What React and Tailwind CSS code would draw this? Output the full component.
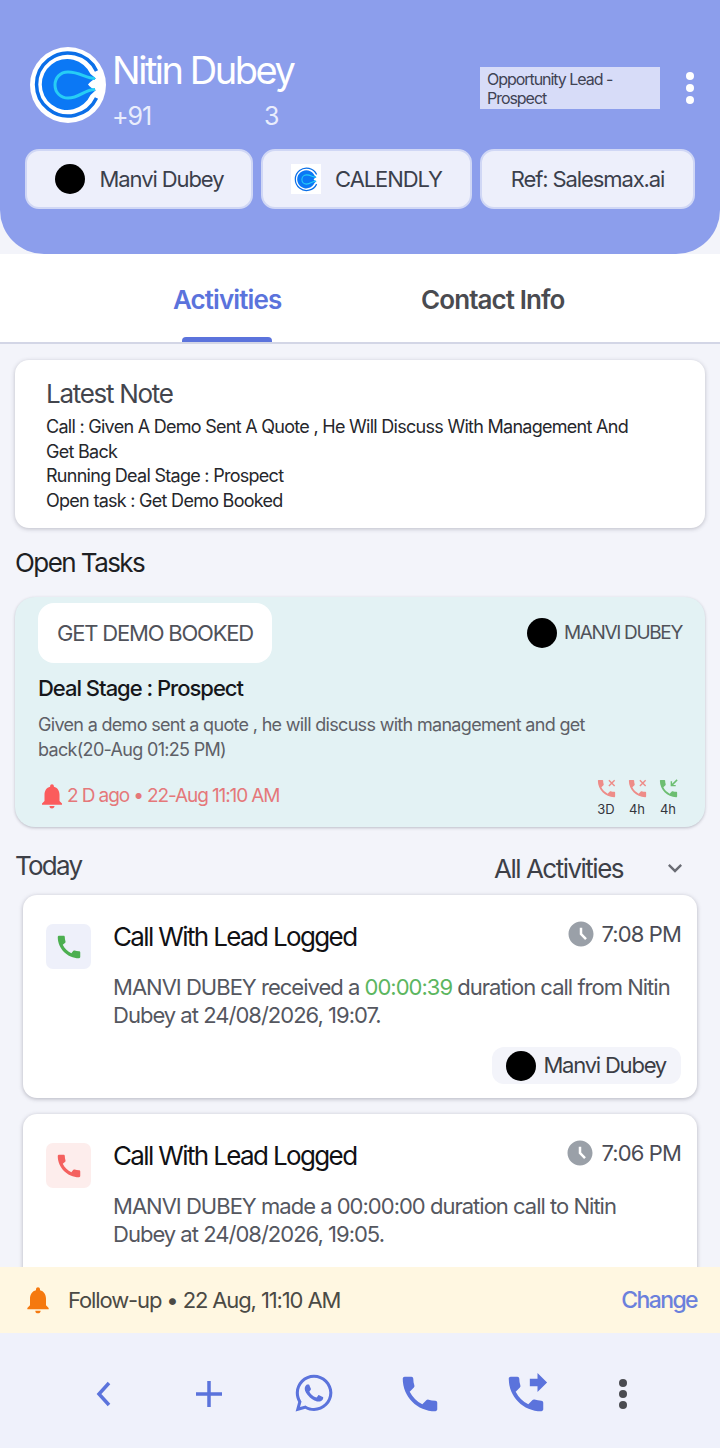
import React from 'react';
import { MdNotifications, MdAccessTimeFilled, MdPhoneForwarded, MdCall, MdKeyboardArrowDown } from 'react-icons/md';
import { FaWhatsapp } from 'react-icons/fa';

const PHONE = 'M6.62 10.79c1.44 2.83 3.76 5.14 6.59 6.59l2.2-2.2c.27-.27.67-.36 1.02-.24 1.12.37 2.33.57 3.57.57.55 0 1 .45 1 1V20c0 .55-.45 1-1 1-9.39 0-17-7.61-17-17 0-.55.45-1 1-1h3.5c.55 0 1 .45 1 1 0 1.25.2 2.45.57 3.57.11.35.03.74-.25 1.02l-2.2 2.2z';

// Calendly style mark: open ring, notched disc, cyan C
function CalendlyLogo({ className }) {
  return (
    <svg className={className} viewBox="0 0 76 76">
      <circle cx="38" cy="38" r="38" fill="#ffffff" />
      <path d="M66.5 24A31.5 31.5 0 1 0 66.5 51" fill="none" stroke="#0B6FE8" strokeWidth="3.5" />
      <path d="M60.5 27A25.5 25.5 0 1 0 60.5 48L66 43C62 42 60 40 58 37.5C60 35 62 33 66 31.5Z" fill="#0B78F5" />
      <path d="M65 31.5C56 31.5 50 25 38 25C30 25 25 31 25 38C25 46 31 51 38 51C50 51 54 42.5 65 42.5" fill="none" stroke="#27CDF5" strokeWidth="3" />
    </svg>
  );
}

function MissedCall({ color = '#EE8C88' }) {
  return (
    <svg className="w-[23px] h-[23px] shrink-0" viewBox="0 0 24 24">
      <path d={PHONE} fill={color} />
      <path d="M14.5 3.5l6 6M20.5 3.5l-6 6" stroke={color} strokeWidth="1.5" fill="none" />
    </svg>
  );
}

function IncomingCall() {
  return (
    <svg className="w-[23px] h-[23px] shrink-0" viewBox="0 0 24 24">
      <path d={PHONE} fill="#6DBE71" />
      <path d="M21 3l-6 6M15 4.5V9h4.5" stroke="#6DBE71" strokeWidth="1.5" fill="none" />
    </svg>
  );
}

function Chip({ children, className }) {
  return (
    <div className={`h-[60px] flex items-center justify-center bg-[#EDEFFB] rounded-[14px] border-2 border-[#D0D7F5] text-[#3B3F4C] text-[22px] tracking-[-0.05em] ${className}`}>
      {children}
    </div>
  );
}

function CallCard({ iconBg, iconColor, time, children, footer, className }) {
  return (
    <div className={`mx-[23px] bg-white rounded-[14px] shadow-[0_1px_4px_rgba(60,60,80,0.35)] pl-[23px] pr-[16px] flex ${className}`}>
      <div className={`w-[45px] h-[45px] mt-[29px] rounded-[7px] flex items-center justify-center shrink-0 ${iconBg}`}>
        <MdCall className={`w-[30px] h-[30px] ${iconColor}`} />
      </div>
      <div className="ml-[22px] flex-1 pt-[23px]">
        <div className="flex items-start justify-between">
          <div className="text-[26px] leading-[38px] text-[#111114] tracking-[-0.063em]">Call With Lead Logged</div>
          <div className="flex items-center mt-[1px] text-[22px] leading-[30px] text-[#4A4C55] tracking-[-0.04em]">
            <MdAccessTimeFilled className="w-[30px] h-[30px] text-[#9AA0A8] mr-[6px]" />
            {time}
          </div>
        </div>
        <div className="mt-[18px] text-[22px] leading-[27.5px] text-[#55575F] tracking-[-0.045em]">{children}</div>
        {footer}
      </div>
    </div>
  );
}

export default function App() {
  return (
    <div className="w-[720px] h-[1448px] flex flex-col overflow-hidden bg-[#F3F4FA] font-['Inter',sans-serif]">
      {/* header */}
      <div className="h-[254px] shrink-0 bg-[#8C9EEC] rounded-b-[44px] px-[24px] pt-[46px]">
        <div className="flex h-[103px]">
          <CalendlyLogo className="w-[76px] h-[76px] ml-[6px] mt-[1px] shrink-0" />
          <div className="ml-[6px] w-[368px] text-white">
            <div className="text-[38px] leading-[48px] tracking-[-0.065em]">Nitin Dubey</div>
            <div className="flex text-[25px] leading-[30px] mt-[7px] text-[#E9EDFC] tracking-[-0.04em]">
              <span className="w-[152px]">+91</span>
              <span>3</span>
            </div>
          </div>
          <div className="w-[180px] h-[42px] mt-[21px] bg-[#D7DCF8] pl-[7px] pt-[3px] text-[16px] leading-[19px] text-[#3F4354] tracking-[-0.065em]">
            Opportunity Lead -<br />Prospect
          </div>
          <div className="flex flex-col gap-[4px] ml-[26px] mt-[26px]">
            <span className="w-[8px] h-[8px] rounded-full bg-white" />
            <span className="w-[8px] h-[8px] rounded-full bg-white" />
            <span className="w-[8px] h-[8px] rounded-full bg-white" />
          </div>
        </div>
        <div className="flex gap-[8px] ml-[1px]">
          <Chip className="w-[228px]">
            <span className="w-[30px] h-[30px] rounded-full bg-black mr-[15px]" />
            Manvi Dubey
          </Chip>
          <Chip className="w-[211px]">
            <span className="w-[30px] h-[30px] bg-white mr-[14px] flex items-center justify-center">
              <CalendlyLogo className="w-[27px] h-[27px]" />
            </span>
            CALENDLY
          </Chip>
          <Chip className="w-[215px]">Ref: Salesmax.ai</Chip>
        </div>
      </div>

      {/* tabs */}
      <div className="h-[90px] shrink-0 bg-white border-b-2 border-[#D3D6E6] flex relative">
        <div className="absolute left-[173px] top-[30px] text-[26px] leading-[32px] font-semibold text-[#5B73DC] tracking-[-0.035em]">Activities</div>
        <div className="absolute left-[421px] top-[30px] text-[26px] leading-[32px] font-semibold text-[#4A4B50] tracking-[-0.035em]">Contact Info</div>
        <div className="absolute left-[182px] bottom-0 w-[90px] h-[5px] rounded-t-[4px] bg-[#5B73DC]" />
      </div>

      {/* scroll area */}
      <div className="flex-1 overflow-hidden pt-[16px]">
        <div className="mx-[15px] h-[168px] bg-white rounded-[14px] shadow-[0_1px_4px_rgba(60,60,80,0.3)] pl-[31px] pr-[60px] pt-[18px]">
          <div className="text-[26px] leading-[32px] text-[#43454D] tracking-[-0.05em]">Latest Note</div>
          <div className="mt-[5px] text-[18px] leading-[24.7px] text-[#26272C] tracking-[-0.04em]">
            Call : Given A Demo Sent A Quote , He Will Discuss With Management And Get Back<br />
            Running Deal Stage : Prospect<br />
            Open task : Get Demo Booked
          </div>
        </div>

        <div className="ml-[15px] mt-[17px] text-[26px] leading-[36px] text-[#1E1F24] tracking-[-0.06em]">Open Tasks</div>

        <div className="mx-[15px] mt-[16px] h-[230px] bg-[#E3F2F4] rounded-[20px] shadow-[0_1px_3px_rgba(60,60,80,0.3)] pl-[23px] pr-[23px] pt-[6px]">
          <div className="flex items-center justify-between">
            <div className="w-[234px] h-[60px] bg-white rounded-[16px] flex items-center justify-center text-[22px] text-[#50525A] tracking-[-0.055em]">GET DEMO BOOKED</div>
            <div className="flex items-center text-[19px] text-[#50525A] tracking-[-0.07em]">
              <span className="w-[30px] h-[30px] rounded-full bg-black mr-[7px]" />
              MANVI DUBEY
            </div>
          </div>
          <div className="mt-[10px] text-[22px] leading-[30px] font-medium text-[#16171B] tracking-[-0.046em]">Deal Stage : Prospect</div>
          <div className="mt-[9px] w-[590px] text-[18px] leading-[25px] text-[#5E6067] tracking-[-0.038em]">
            Given a demo sent a quote , he will discuss with management and get back(20-Aug 01:25 PM)
          </div>
          <div className="flex items-end justify-between mt-[16px]">
            <div className="flex items-center h-[36px] text-[19px] text-[#E5787A] tracking-[-0.058em]">
              <MdNotifications className="w-[30px] h-[30px] text-[#FB5C5C] -mr-[1px] -ml-[1px]" />
              <span className="ml-[1px]">2 D ago • 22-Aug 11:10 AM</span>
            </div>
            <div className="flex gap-[9px] mr-[3px] mt-[-4px] translate-y-[3px]">
              {[['3D', <MissedCall key="a" />], ['4h', <MissedCall key="b" />], ['4h', <IncomingCall key="c" />]].map(([label, icon], i) => (
                <div key={i} className="w-[22px] flex flex-col items-center">
                  {icon}
                  <span className="mt-[1px] text-[13px] leading-[16px] text-[#33353C]">{label}</span>
                </div>
              ))}
            </div>
          </div>
        </div>

        <div className="flex items-center mt-[18px] h-[40px] pl-[15px] pr-[31px]">
          <div className="text-[26px] text-[#3D3F47] tracking-[-0.068em]">Today</div>
          <div className="ml-auto text-[26px] text-[#3D3F47] tracking-[-0.058em] mt-[7px]">All Activities</div>
          <MdKeyboardArrowDown className="w-[28px] h-[28px] text-[#6A6C74] ml-[38px] mt-[6px]" />
        </div>

        <CallCard
          className="mt-[10px] h-[203px]"
          iconBg="bg-[#EEF0FA]"
          iconColor="text-[#4CAF50]"
          time="7:08 PM"
          footer={
            <div className="flex justify-end mt-[18px]">
              <div className="h-[37px] pl-[14px] pr-[15px] rounded-[12px] bg-[#F3F4FA] flex items-center text-[22px] text-[#3B3D45] tracking-[-0.055em]">
                <span className="w-[30px] h-[30px] rounded-full bg-black mr-[7px]" />
                Manvi Dubey
              </div>
            </div>
          }
        >
          MANVI DUBEY received a <span className="text-[#5CB660]">00:00:39</span> duration call from Nitin Dubey at 24/08/2026, 19:07.
        </CallCard>

        <CallCard
          className="mt-[16px] h-[203px]"
          iconBg="bg-[#FDEDEC]"
          iconColor="text-[#F4615F]"
          time="7:06 PM"
        >
          MANVI DUBEY made a 00:00:00 duration call to Nitin Dubey at 24/08/2026, 19:05.
        </CallCard>
      </div>

      {/* follow-up bar */}
      <div className="h-[66px] shrink-0 bg-[#FFF7E1] flex items-center pl-[22px] pr-[23px]">
        <MdNotifications className="w-[32px] h-[32px] text-[#F5790F]" />
        <span className="ml-[14px] text-[22px] text-[#4B4A45] tracking-[-0.051em]">Follow-up • 22 Aug, 11:10 AM</span>
        <span className="ml-auto text-[23px] font-medium text-[#6B80DC] tracking-[-0.07em]">Change</span>
      </div>

      {/* bottom nav */}
      <div className="h-[115px] shrink-0 bg-[#EFF1FB] relative">
        <svg className="absolute left-[94px] top-[47px] w-[20px] h-[28px]" viewBox="0 0 20 28" fill="none" stroke="#5B73DC" strokeWidth="3.5">
          <path d="M15 3L5 14l10 11" />
        </svg>
        <svg className="absolute left-[195px] top-[47px] w-[28px] h-[28px]" viewBox="0 0 28 28" fill="none" stroke="#5B73DC" strokeWidth="3.5">
          <path d="M14 1v26M1 14h26" />
        </svg>
        <FaWhatsapp className="absolute left-[293px] top-[39px] w-[42px] h-[42px] text-[#5B73DC]" />
        <svg className="absolute left-[397px] top-[38px] w-[46px] h-[46px]" viewBox="0 0 24 24">
          <path d={PHONE} fill="#5B73DC" />
        </svg>
        <MdPhoneForwarded className="absolute left-[503px] top-[38px] w-[46px] h-[46px] text-[#5B73DC]" />
        <div className="absolute left-[619px] top-[46px] flex flex-col gap-[3px]">
          <span className="w-[8px] h-[8px] rounded-full bg-[#4A4B50]" />
          <span className="w-[8px] h-[8px] rounded-full bg-[#4A4B50]" />
          <span className="w-[8px] h-[8px] rounded-full bg-[#4A4B50]" />
        </div>
      </div>
    </div>
  );
}
